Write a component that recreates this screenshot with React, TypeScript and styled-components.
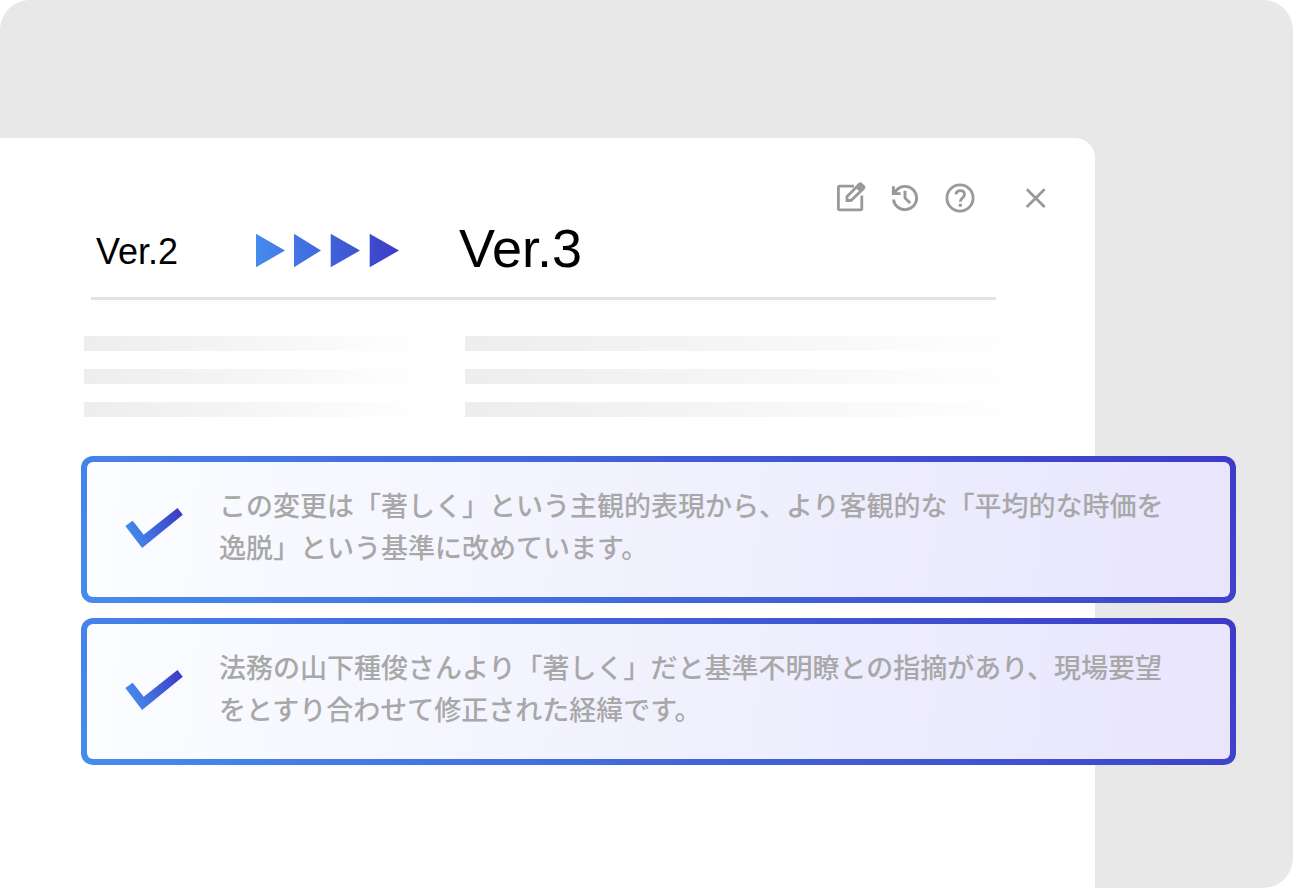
import React, { useId } from "react";
import styled, { createGlobalStyle } from "styled-components";

const GlobalStyle = createGlobalStyle`
  *, *::before, *::after { box-sizing: border-box; }
  body {
    margin: 0;
    background: #ffffff;
    color: #000000;
    font-family: "Liberation Sans", Arial, "Noto Sans CJK JP", sans-serif;
  }
`;

const Backdrop = styled.div`
  display: flex;
  flex-direction: column;
  min-height: 100vh;
  padding: 138px 198px 0 0;
  border-radius: 30px;
  background: #e8e8e8;
`;

const Panel = styled.main`
  flex: 1;
  padding: 42px 0 123px;
  border-radius: 0 20px 0 0;
  background: #ffffff;
`;

const Toolbar = styled.div`
  display: flex;
  justify-content: flex-end;
  gap: 19px;
  padding-right: 41px;
`;

const IconButton = styled.button<{ $apart?: boolean }>`
  display: block;
  width: 36px;
  height: 36px;
  margin-left: ${({ $apart }) => ($apart ? "21px" : "0")};
  padding: 0;
  border: 0;
  background: none;
  color: #999999;
  cursor: pointer;

  svg { display: block; }
`;

const VersionHeader = styled.header`
  display: grid;
  grid-template-columns: 159px 204px 1fr;
  align-items: end;
  margin: 8px 99px 0 91px;
  padding: 0 0 25px 5px;
  border-bottom: 3px solid #e2e2e2;
`;

const Version = styled.span<{ $current?: boolean }>`
  font-size: ${({ $current }) => ($current ? "54px" : "36px")};
  line-height: ${({ $current }) => ($current ? "48px" : "40px")};
`;

const ArrowsSvg = styled.svg`
  display: block;
`;

const Columns = styled.div`
  display: grid;
  grid-template-columns: 346px 1fr;
  gap: 35px;
  margin-top: 36px;
  padding: 0 65px 0 84px;
`;

const Lines = styled.div`
  display: flex;
  flex-direction: column;
  gap: 18px;
`;

const Line = styled.div`
  height: 15px;
  background: linear-gradient(90deg, #ededed, #ffffff);
`;

const Notes = styled.ul`
  display: flex;
  flex-direction: column;
  gap: 15px;
  margin: 39px -141px 0 81px;
  padding: 0;
  list-style: none;
`;

const Note = styled.li`
  display: flex;
  align-items: center;
  gap: 36px;
  padding: 22px 60px 29px 38px;
  border: 6px solid transparent;
  border-radius: 12px;
  background:
    linear-gradient(95deg, #fbfdff, #f1f1fe 50%, #e8e5fd) padding-box,
    linear-gradient(45deg, #458cee, #3d3bc6) border-box;
`;

const CheckSvg = styled.svg`
  flex: none;
`;

const NoteText = styled.p`
  flex: 1;
  margin: 0;
  color: #a8a8a8;
  font-family: "Noto Sans CJK JP", sans-serif;
  font-size: 27px;
  font-weight: 500;
  line-height: 42px;
`;

function EditIcon() {
  return (
    <svg width="36" height="36" viewBox="0 0 36 36" fill="none" stroke="currentColor" strokeWidth="2.8" aria-hidden="true">
      <path d="M22 6.1H7.600a1.200 1.200 0 0 0-1.200 1.200v21.300a1.200 1.200 0 0 0 1.200 1.200h21a1.200 1.200 0 0 0 1.200-1.200V15.500" />
      <path d="M15 20.500v-4L27 4.400a1.800 1.800 0 0 1 2.500 0l1.800 1.800a1.800 1.800 0 0 1 0 2.500L19 20.500z" />
      <path d="M24 8.200L27.300 4.600a1.500 1.500 0 0 1 2.200 0l1.600 1.700a1.500 1.500 0 0 1 0 2.200L27.700 11.800z" fill="currentColor" stroke="none" />
    </svg>
  );
}

function HistoryIcon() {
  return (
    <svg width="36" height="36" viewBox="-14 -974 988 988" fill="currentColor" aria-hidden="true">
      <path d="M480-120q-138 0-240.500-91.500T122-440h82q14 104 92.500 172T480-200q117 0 198.500-81.500T760-480q0-117-81.500-198.500T480-760q-69 0-129 32t-101 88h110v80H120v-240h80v94q51-64 124.500-99T480-840q75 0 140.500 28.500t114 77q48.500 48.500 77 114T840-480q0 75-28.500 140.500t-77 114q-48.500 48.500-114 77T480-120Zm112-192L440-464v-216h80v184l128 128-56 56Z" />
    </svg>
  );
}

function HelpIcon() {
  return (
    <svg width="36" height="36" viewBox="0 0 36 36" fill="none" stroke="currentColor" strokeWidth="2.8" aria-hidden="true">
      <circle cx="18" cy="18" r="13.1" />
      <path d="M13.700 14.300C14.300 11.800 16 10.700 18.200 10.700c2.500 0 4.300 1.500 4.300 3.800 0 3-4.200 3.700-4.200 7.300" />
      <circle cx="18.300" cy="25.200" r="1.700" fill="currentColor" stroke="none" />
    </svg>
  );
}

function CloseIcon() {
  return (
    <svg width="36" height="36" viewBox="0 0 36 36" fill="none" stroke="currentColor" strokeWidth="2.700" aria-hidden="true">
      <path d="M8.800 9.200l17.800 17.800M26.600 9.200L8.800 27" />
    </svg>
  );
}

function Arrows() {
  const id = useId();
  return (
    <ArrowsSvg width="145" height="40" viewBox="0 0 145 40" role="img" aria-label="から">
      <defs>
        <linearGradient id={id} gradientUnits="userSpaceOnUse" x1="0" y1="28" x2="144" y2="12">
          <stop offset="0" stopColor="#458cee" />
          <stop offset="1" stopColor="#3d3bc6" />
        </linearGradient>
      </defs>
      <path
        fill={`url(#${id})`}
        d="M1 1.800L30 18.500 1 35.200zM39 1.800L66 18.500 39 35.200zM75.700 1.800L105 18.500 75.700 35.200zM114.700 1.800L144 18.500 114.700 35.200z"
      />
    </ArrowsSvg>
  );
}

function Check() {
  const id = useId();
  return (
    <CheckSvg width="58" height="44" viewBox="0 -2 58 44" aria-hidden="true">
      <defs>
        <linearGradient id={id} gradientUnits="userSpaceOnUse" x1="4" y1="32" x2="56" y2="8">
          <stop offset="0" stopColor="#458cee" />
          <stop offset="1" stopColor="#3d3bc6" />
        </linearGradient>
      </defs>
      <path fill={`url(#${id})`} d="M.3 20L7.700 14.700 18.700 28.700 52.500 2 57.800 8.700 17.100 42z" />
    </CheckSvg>
  );
}

function Placeholder() {
  return (
    <Lines aria-hidden="true">
      <Line />
      <Line />
      <Line />
    </Lines>
  );
}

const notes = [
  "この変更は「著しく」という主観的表現から、より客観的な「平均的な時価を逸脱」という基準に改めています。",
  "法務の山下種俊さんより「著しく」だと基準不明瞭との指摘があり、現場要望をとすり合わせて修正された経緯です。",
];

export default function App() {
  return (
    <>
      <GlobalStyle />
      <Backdrop lang="ja">
        <Panel>
          <Toolbar>
            <IconButton type="button" aria-label="編集"><EditIcon /></IconButton>
            <IconButton type="button" aria-label="履歴"><HistoryIcon /></IconButton>
            <IconButton type="button" aria-label="ヘルプ"><HelpIcon /></IconButton>
            <IconButton type="button" aria-label="閉じる" $apart><CloseIcon /></IconButton>
          </Toolbar>
          <VersionHeader>
            <Version>Ver.2</Version>
            <Arrows />
            <Version $current>Ver.3</Version>
          </VersionHeader>
          <Columns>
            <Placeholder />
            <Placeholder />
          </Columns>
          <Notes>
            {notes.map((text) => (
              <Note key={text}>
                <Check />
                <NoteText>{text}</NoteText>
              </Note>
            ))}
          </Notes>
        </Panel>
      </Backdrop>
    </>
  );
}
